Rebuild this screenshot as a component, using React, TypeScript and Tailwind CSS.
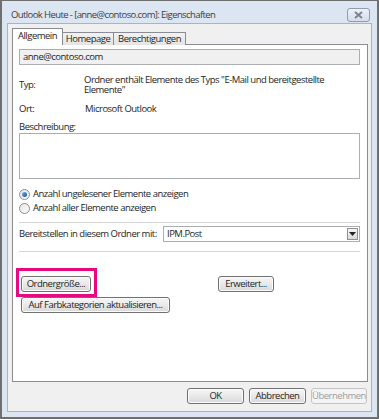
import React from "react";

const font = "font-['Segoe_UI','Open_Sans','Noto_Sans',sans-serif]";

function WinButton({
  children,
  className = "",
  disabled = false,
}: {
  children: React.ReactNode;
  className?: string;
  disabled?: boolean;
}) {
  return (
    <button
      type="button"
      className={`h-[16px] rounded-[3px] border text-[9.5px] tracking-[-0.5px] leading-none whitespace-nowrap flex items-center justify-center ${
        disabled
          ? "border-[#c4c4c4] bg-[#f4f4f4] text-[#9d9d9d]"
          : "border-[#707070] bg-gradient-to-b from-[#f6f6f6] via-[#e9e9e9] to-[#d9d9d9] text-[#1e1e1e] shadow-[inset_0_0_0_1px_#fcfcfc]"
      } ${className}`}
    >
      {children}
    </button>
  );
}

function Radio({ checked, label }: { checked?: boolean; label: string }) {
  return (
    <div className="flex items-center gap-[3px] h-[12px]">
      <span className="w-[11px] h-[11px] rounded-full border border-[#8e8f8f] bg-gradient-to-br from-[#e6e6e6] to-[#fbfbfb] flex items-center justify-center">
        {checked && (
          <span className="w-[5px] h-[5px] rounded-full bg-gradient-to-br from-[#7bb3e4] to-[#0f4d94]" />
        )}
      </span>
      <span>{label}</span>
    </div>
  );
}

export default function App() {
  return (
    <div
      className={`${font} w-[379px] h-[419px] border-l-2 border-r-2 border-t border-b-2 border-[#6f6f6f] bg-[#dce6f3] flex flex-col text-[9.5px] tracking-[-0.5px] text-[#1e1e1e] whitespace-nowrap`}
    >
      {/* title bar */}
      <div className="h-[22px] flex items-center justify-between pl-[9px] pr-[7px]">
        <span className="text-[9.5px] tracking-[-0.6px] text-[#3c3c3c] mt-[6px]">
          Outlook Heute - [anne@contoso.com]: Eigenschaften
        </span>
        <span className="w-[23px] h-[14px] rounded-[3px] border border-[#8e9bb0] bg-gradient-to-b from-[#eef2f8] to-[#d5dde9] flex items-center justify-center mt-[6px]">
          <svg width="9" height="8" viewBox="0 0 9 8">
            <path d="M1 1l7 6M8 1L1 7" stroke="#7d8490" strokeWidth="2" />
          </svg>
        </span>
      </div>

      {/* client area */}
      <div className="flex-1 mx-[5px] mb-[5px] border border-[#aab3bf] bg-[#f0f0f0] flex flex-col pl-[4px] pr-[3px] pt-[4px]">
        {/* tabs */}
        <div className="flex items-end h-[17px] relative z-10">
          <div className="h-[17px] w-[51px] border border-b-0 border-[#898c95] bg-white flex items-center justify-center pb-[1px]">
            Allgemein
          </div>
          <div className="h-[13px] w-[51px] border border-l-0 border-b-0 border-[#898c95] bg-gradient-to-b from-[#f2f2f2] to-[#e4e4e4] flex items-center justify-center">
            Homepage
          </div>
          <div className="h-[13px] w-[72px] border border-l-0 border-b-0 border-[#898c95] bg-gradient-to-b from-[#f2f2f2] to-[#e4e4e4] flex items-center justify-center">
            Berechtigungen
          </div>
        </div>

        {/* panel */}
        <div className="-mt-px h-[338px] border border-[#898c95] bg-white flex flex-col pl-[6px] pr-[7px] pt-[4px]">
          <div className="h-[16px] border border-[#abadb3] bg-[#f0f0f0] flex items-center px-[3px]">
            anne@contoso.com
          </div>

          <div className="flex items-center mt-[10px]">
            <span className="w-[65px]">Typ:</span>
            <span className="leading-[10px] w-[270px] whitespace-normal">
              Ordner enthält Elemente des Typs "E-Mail und bereitgestellte Elemente"
            </span>
          </div>

          <div className="flex items-center mt-[8px] h-[12px]">
            <span className="w-[66px]">Ort:</span>
            <span>Microsoft Outlook</span>
          </div>

          <div className="mt-[7px] h-[11px] flex items-center">Beschreibung:</div>

          <div className="h-[46px] border border-[#abadb3] bg-white" />

          <div className="mt-[9px] flex flex-col gap-[2px]">
            <Radio checked label="Anzahl ungelesener Elemente anzeigen" />
            <Radio label="Anzahl aller Elemente anzeigen" />
          </div>

          <div className="mt-[8px] border-t border-[#d5d5d5]" />

          <div className="mt-[3px] flex items-center">
            <span className="w-[144px]">Bereitstellen in diesem Ordner mit:</span>
            <div className="flex-1 h-[16px] border border-[#abadb3] bg-white flex items-center justify-between pl-[3px] pr-[1px]">
              <span>IPM.Post</span>
              <span className="w-[11px] h-[12px] border border-[#8f8f8f] bg-gradient-to-b from-[#f5f5f5] to-[#dadada] flex items-center justify-center">
                <svg width="7" height="4" viewBox="0 0 7 4">
                  <path d="M0 0h7L3.5 4z" fill="#222" />
                </svg>
              </span>
            </div>
          </div>

          <div className="mt-[9px] border-t border-[#d5d5d5]" />

          <div className="mt-[24px] flex items-center">
            <div className="relative ml-[2px]">
              <WinButton className="w-[70px]">Ordnergröße...</WinButton>
              {/* highlight marker */}
              <div className="absolute -left-[5px] -top-[8px] w-[81px] h-[29px] border-[3.5px] border-[#e6097f]" />
            </div>
            <WinButton className="w-[56px] ml-[127px]">Erweitert...</WinButton>
          </div>
          <WinButton className="w-[149px] ml-[2px] mt-[5px]">
            Auf Farbkategorien aktualisieren...
          </WinButton>
        </div>

        {/* bottom buttons */}
        <div className="mt-[6px] flex justify-end gap-[5px] pr-[1px]">
          <WinButton className="w-[57px]">OK</WinButton>
          <WinButton className="w-[57px]">Abbrechen</WinButton>
          <WinButton className="w-[56px]" disabled>
            Übernehmen
          </WinButton>
        </div>
      </div>
    </div>
  );
}
